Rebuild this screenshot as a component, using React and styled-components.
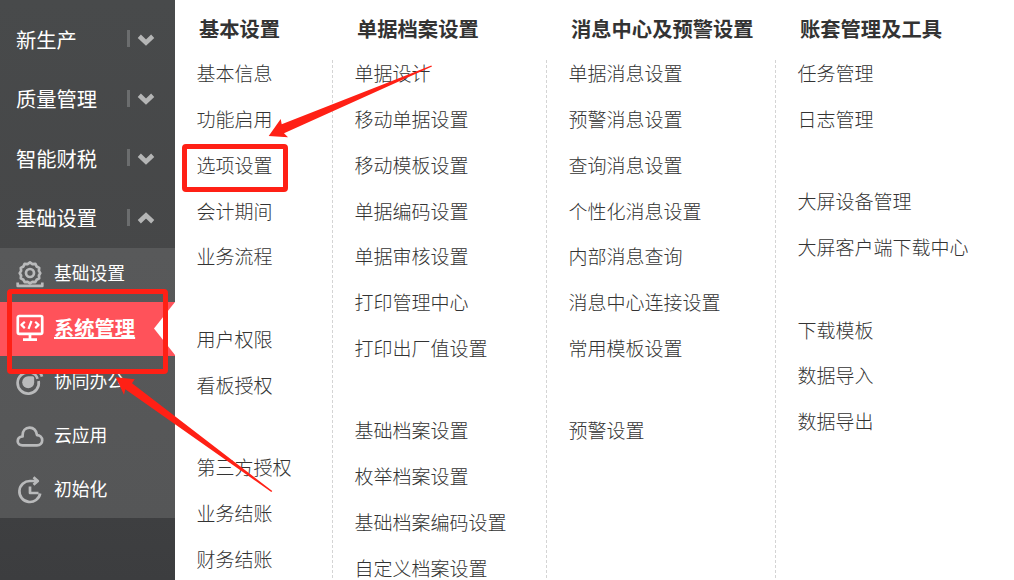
import styled, { createGlobalStyle } from "styled-components";

const sections = [
  { label: "新生产" },
  { label: "质量管理" },
  { label: "智能财税" },
  { label: "基础设置", open: true },
];

const modules = [
  { label: "基础设置", icon: GearIcon },
  { label: "系统管理", icon: MonitorIcon, active: true },
  { label: "协同办公", icon: OfficeIcon },
  { label: "云应用", icon: CloudIcon },
  { label: "初始化", icon: ResetIcon },
];

const columns = [
  {
    title: "基本设置",
    width: 158,
    groups: [
      ["基本信息", "功能启用", "选项设置", "会计期间", "业务流程"],
      ["用户权限", "看板授权"],
      ["第三方授权", "业务结账", "财务结账"],
    ],
  },
  {
    title: "单据档案设置",
    width: 214,
    groups: [
      [
        "单据设计",
        "移动单据设置",
        "移动模板设置",
        "单据编码设置",
        "单据审核设置",
        "打印管理中心",
        "打印出厂值设置",
      ],
      ["基础档案设置", "枚举档案设置", "基础档案编码设置", "自定义档案设置"],
    ],
  },
  {
    title: "消息中心及预警设置",
    width: 229,
    groups: [
      [
        "单据消息设置",
        "预警消息设置",
        "查询消息设置",
        "个性化消息设置",
        "内部消息查询",
        "消息中心连接设置",
        "常用模板设置",
      ],
      ["预警设置"],
    ],
  },
  {
    title: "账套管理及工具",
    width: 238,
    groups: [
      ["任务管理", "日志管理"],
      ["大屏设备管理", "大屏客户端下载中心"],
      ["下载模板", "数据导入", "数据导出"],
    ],
  },
];

export default function App() {
  return (
    <>
      <GlobalStyle />
      <Page>
        <Sidebar>
          {sections.map(({ label, open }) => (
            <Section key={label}>
              {label}
              <Toggle>
                <Divider />
                <Chevron viewBox="0 0 18 12" $open={open}>
                  <path d="M2.300 2.300L9 8.600L15.700 2.300" />
                </Chevron>
              </Toggle>
            </Section>
          ))}
          <SubMenu>
            {modules.map(({ label, icon: Icon, active }) => (
              <SubItem key={label} $active={active}>
                <Icon />
                <SubLabel $active={active}>{label}</SubLabel>
                {active && <Notch />}
              </SubItem>
            ))}
          </SubMenu>
        </Sidebar>
        <Panel>
          {columns.map(({ title, width, groups }) => (
            <Column key={title} $width={width}>
              <Title>{title}</Title>
              <Groups>
                {groups.map((items) => (
                  <Group key={items[0]}>
                    {items.map((item) => (
                      <Item key={item}>{item}</Item>
                    ))}
                  </Group>
                ))}
              </Groups>
            </Column>
          ))}
        </Panel>
        <ModuleMark />
        <OptionMark />
        <Arrows viewBox="0 0 1014 580">
          <path d="M268.7 136L280.7 119L281.7 124.3L431.3 65.6L432 66.6L284 133.3L288 137.3Z" />
          <path d="M115.7 377.3L134.7 379.3L132 383.3L272.3 491L271.3 492L125.3 389.3L124 394.7Z" />
        </Arrows>
      </Page>
    </>
  );
}

function GearIcon() {
  return (
    <Icon viewBox="0 0 28 28">
      <path d="M14 2.4l2.4 1.7 3-.3 1.2 2.7 2.6 1.4-.3 3 1.4 2.2-1.4 2.4.3 2.9-2.6 1.4-1.3 2.4-2.9-.3-2.4 1.5-2.4-1.5-2.9.3-1.3-2.4-2.6-1.4.3-2.9-1.4-2.4 1.4-2.2-.3-3 2.6-1.4 1.2-2.7 3 .3z" />
      <circle cx="14" cy="13" r="4" />
      <path d="M1.7 22.5v3.4h24.6v-3.4" />
    </Icon>
  );
}

function MonitorIcon() {
  return (
    <Icon viewBox="0 0 28 28" $active>
      <rect x="1.8" y="2" width="24.4" height="17.8" rx="1.5" />
      <path
        d="M8.8 7.700L5.400 10.900L8.800 14.100M19.200 7.700L22.600 10.900L19.200 14.100M15.500 7L12.500 14.800"
        strokeWidth="2.200"
      />
      <path d="M14 20v5M7 25.6h14" />
    </Icon>
  );
}

function OfficeIcon() {
  return (
    <Icon viewBox="0 0 28 28">
      <path d="M13.500 4.500A10.600 10.600 0 1 0 22.600 13" />
      <path
        d="M12.200 8.300H16.500Q18.200 8.300 18.200 10V14.300A6 6 0 1 1 12.200 8.300Z"
        fill="currentColor"
        stroke="none"
      />
      <path d="M15.500 4.800a8.500 8.500 0 0 1 6 6M20.500 2.600a9 9 0 0 1 5.500 6" />
    </Icon>
  );
}

function CloudIcon() {
  return (
    <Icon viewBox="0 0 28 28">
      <path d="M6.5 23.3H21c3.3 0 5.2-2.2 5.2-5 0-3.3-2.6-5-5.2-5.2C20.2 8.4 17.6 5.7 13.6 5.7c-4.4 0-7 3.2-7 7.6v1.2C3.7 14.7 1.7 16.6 1.7 19.3c0 2.4 2 4 4.8 4z" />
    </Icon>
  );
}

function ResetIcon() {
  return (
    <Icon viewBox="0 0 28 28">
      <path d="M20.5 5H14a10.500 10.500 0 1 0 10.200 12.500M17.500 1.200L21.800 5L17.500 8.800M14 10.500v6.500h8.500" />
    </Icon>
  );
}

const GlobalStyle = createGlobalStyle`
  * {
    box-sizing: border-box;
  }

  body {
    margin: 0;
    overflow: hidden;
    font-family: "Noto Sans CJK SC", sans-serif;
  }
`;

const Page = styled.div`
  position: relative;
  display: flex;
  width: 1014px;
  height: 580px;
  overflow: hidden;
  background: #fff;
`;

const Sidebar = styled.nav`
  width: 175px;
  padding-top: 10px;
  color: #fff;
  background: linear-gradient(#484a4b, #464748 45%, #3c3d3f);
`;

const Section = styled.div`
  display: flex;
  align-items: center;
  justify-content: space-between;
  height: 59.5px;
  padding: 0 20px 2px 16px;
  font-size: 20.3px;
  line-height: 30px;
`;

const Toggle = styled.span`
  display: flex;
  align-items: center;
  gap: 7px;
`;

const Divider = styled.span`
  width: 3px;
  height: 17px;
  background: #6b6d6e;
`;

const Chevron = styled.svg`
  width: 18px;
  height: 12px;
  margin-top: 2px;
  overflow: visible;
  fill: none;
  stroke: #b4b5b5;
  stroke-width: 4.6;
  transform: ${({ $open }) => ($open ? "rotate(180deg)" : "none")};
`;

const SubMenu = styled.div`
  background: linear-gradient(#58595a, #555657);
`;

const SubItem = styled.div`
  position: relative;
  display: flex;
  align-items: center;
  gap: 10px;
  height: 54px;
  padding: 0 0 2px 16px;
  background: ${({ $active }) => ($active ? "#ff525a" : "transparent")};
`;

const SubLabel = styled.span`
  padding-bottom: ${({ $active }) => ($active ? "3px" : "5px")};
  font-size: ${({ $active }) => ($active ? "20.3px" : "17.8px")};
  font-weight: ${({ $active }) => ($active ? 700 : 400)};
  line-height: 28px;
  text-decoration: ${({ $active }) => ($active ? "underline" : "none")};
  text-decoration-thickness: 2px;
`;

const Notch = styled.span`
  position: absolute;
  top: 0;
  right: 0;
  width: 21px;
  height: 53px;
  background: #fff;
  clip-path: polygon(100% 0, 0 50%, 100% 100%);
`;

const Icon = styled.svg`
  width: 28px;
  height: 28px;
  flex: none;
  color: ${({ $active }) => ($active ? "#fff" : "#b9babb")};
  fill: none;
  stroke: currentColor;
  stroke-width: 2.7;
  stroke-linejoin: round;
`;

const Panel = styled.main`
  display: flex;
`;

const Column = styled.section`
  display: flex;
  flex-direction: column;
  width: ${({ $width }) => $width}px;
  color: #333;

  &:not(:last-child) > div {
    background: repeating-linear-gradient(#d4d4d4 0 3px, transparent 3px 5px) right / 1px 100% no-repeat;
  }
`;

const Title = styled.h2`
  flex: none;
  height: 60px;
  margin: 0;
  padding-left: 24px;
  font-size: 20.3px;
  font-weight: 700;
  line-height: 56px;
  white-space: nowrap;
`;

const Groups = styled.div`
  display: flex;
  flex: 1;
  flex-direction: column;
  gap: 36.6px;
`;

const Group = styled.ul`
  flex: none;
  margin: 0;
  padding: 0 0 0 21.4px;
  list-style: none;

  &:first-child {
    margin-top: -9.8px;
  }
`;

const Item = styled.li`
  height: 45.8px;
  font-size: 19px;
  font-weight: 300;
  line-height: 45.8px;
  white-space: nowrap;
`;

const Mark = styled.div`
  position: absolute;
  border: 5px solid #ff2015;
  border-radius: 4px;
`;

const ModuleMark = styled(Mark)`
  top: 289px;
  left: 7px;
  width: 161px;
  height: 85px;
`;

const OptionMark = styled(Mark)`
  top: 144px;
  left: 182px;
  width: 106px;
  height: 48px;
`;

const Arrows = styled.svg`
  position: absolute;
  inset: 0;
  fill: #ff2015;
`;
